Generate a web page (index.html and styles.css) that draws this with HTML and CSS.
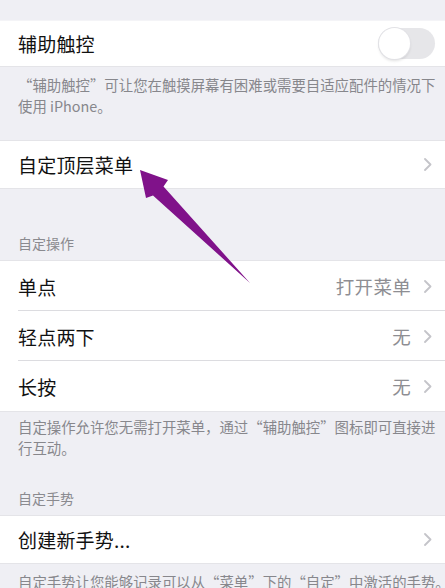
FILE: index.html
```html
<!DOCTYPE html>
<html lang="zh-CN">
<head>
<meta charset="utf-8">
<title>辅助触控</title>
<link rel="stylesheet" href="styles.css">
</head>
<body>
<div class="screen">
  <section class="section s1">
    <div class="group">
      <div class="row row-first">
        <span class="title">辅助触控</span>
        <span class="switch"><span class="knob"></span></span>
      </div>
    </div>
    <p class="footer">“辅助触控”可让您在触摸屏幕有困难或需要自适应配件的情况下<br>使用 iPhone。</p>
  </section>

  <section class="section s2">
    <div class="group">
      <div class="row">
        <span class="title">自定顶层菜单</span>
        <span class="accessory"><svg class="chev" viewBox="0 0 8 13"><path d="M1 1l5.5 5.5L1 12"/></svg></span>
      </div>
    </div>
  </section>

  <section class="section s3">
    <p class="header">自定操作</p>
    <div class="group">
      <div class="row row-tall sep">
        <span class="title">单点</span>
        <span class="accessory"><span class="value">打开菜单</span><svg class="chev" viewBox="0 0 8 13"><path d="M1 1l5.5 5.5L1 12"/></svg></span>
      </div>
      <div class="row row-tall sep">
        <span class="title">轻点两下</span>
        <span class="accessory"><span class="value">无</span><svg class="chev" viewBox="0 0 8 13"><path d="M1 1l5.5 5.5L1 12"/></svg></span>
      </div>
      <div class="row row-tall">
        <span class="title">长按</span>
        <span class="accessory"><span class="value">无</span><svg class="chev" viewBox="0 0 8 13"><path d="M1 1l5.5 5.5L1 12"/></svg></span>
      </div>
    </div>
    <p class="footer footer-tight">自定操作允许您无需打开菜单，通过“辅助触控”图标即可直接进<br>行互动。</p>
  </section>

  <section class="section s4">
    <p class="header">自定手势</p>
    <div class="group">
      <div class="row">
        <span class="title">创建新手势...</span>
        <span class="accessory"><svg class="chev" viewBox="0 0 8 13"><path d="M1 1l5.5 5.5L1 12"/></svg></span>
      </div>
    </div>
    <p class="footer">自定手势让您能够记录可以从“菜单”下的“自定”中激活的手势。</p>
  </section>

  <svg class="arrow" viewBox="0 0 445 588" width="445" height="588">
    <polygon points="140,170 168,180 163.5,186.5 250,283 153,195.5 146,198"/>
  </svg>
</div>
</body>
</html>
```

FILE: styles.css
```css
html, body {
  margin: 0;
  padding: 0;
  background: #efeff4;
}

.screen {
  position: relative;
  width: 445px;
  height: 588px;
  overflow: hidden;
  padding-top: 20px;
  box-sizing: border-box;
  font-family: "Noto Sans CJK SC", "Noto Sans", sans-serif;
  color: #111;
}

.section {
  margin: 0;
}

.s2 { margin-top: 24px; }
.s3 { margin-top: 44px; }
.s4 { margin-top: 30px; }

.group {
  background: #fff;
  border-top: 1px solid #e4e4e8;
  border-bottom: 1px solid #e4e4e8;
}

.s1 .group { border-top-color: #f4f4f7; }

.row {
  position: relative;
  height: 47px;
  display: flex;
  align-items: center;
  justify-content: space-between;
  padding: 0 13px 0 18px;
  box-sizing: border-box;
}

.row-first {
  height: 45px;
  padding-right: 10px;
}

.row-tall {
  height: 50px;
}

.sep::after {
  content: "";
  position: absolute;
  left: 18px;
  right: 0;
  bottom: 0;
  height: 1px;
  background: #dcdce0;
}

.title {
  font-size: 19px;
  letter-spacing: 0.2px;
}

.accessory {
  display: flex;
  align-items: center;
  gap: 13px;
}

.value {
  font-size: 18.5px;
  color: #8e8e93;
  letter-spacing: 0.3px;
}

.chev {
  width: 8px;
  height: 13px;
  fill: none;
  stroke: #c4c4c9;
  stroke-width: 1.8;
  stroke-linecap: round;
  stroke-linejoin: round;
}

.switch {
  position: relative;
  width: 57px;
  height: 31px;
  border-radius: 16px;
  background: #e6e6e9;
}

.knob {
  position: absolute;
  left: 1px;
  top: 0;
  width: 31px;
  height: 31px;
  border-radius: 50%;
  background: #fff;
  box-shadow: 0 0 0 1px #e2e2e6, 0 2px 3px rgba(0, 0, 0, 0.12);
}

.footer {
  margin: 0;
  padding: 7px 10px 0 18px;
  font-size: 14.4px;
  line-height: 21px;
  color: #87878c;
  white-space: nowrap;
}

.footer-tight {
  padding-top: 4px;
}

.header {
  margin: 0;
  padding: 0 18px 7px;
  font-size: 14px;
  line-height: 20px;
  color: #8a8a8f;
}

.arrow {
  position: absolute;
  left: 0;
  top: 0;
  fill: #80128a;
  pointer-events: none;
}
```
